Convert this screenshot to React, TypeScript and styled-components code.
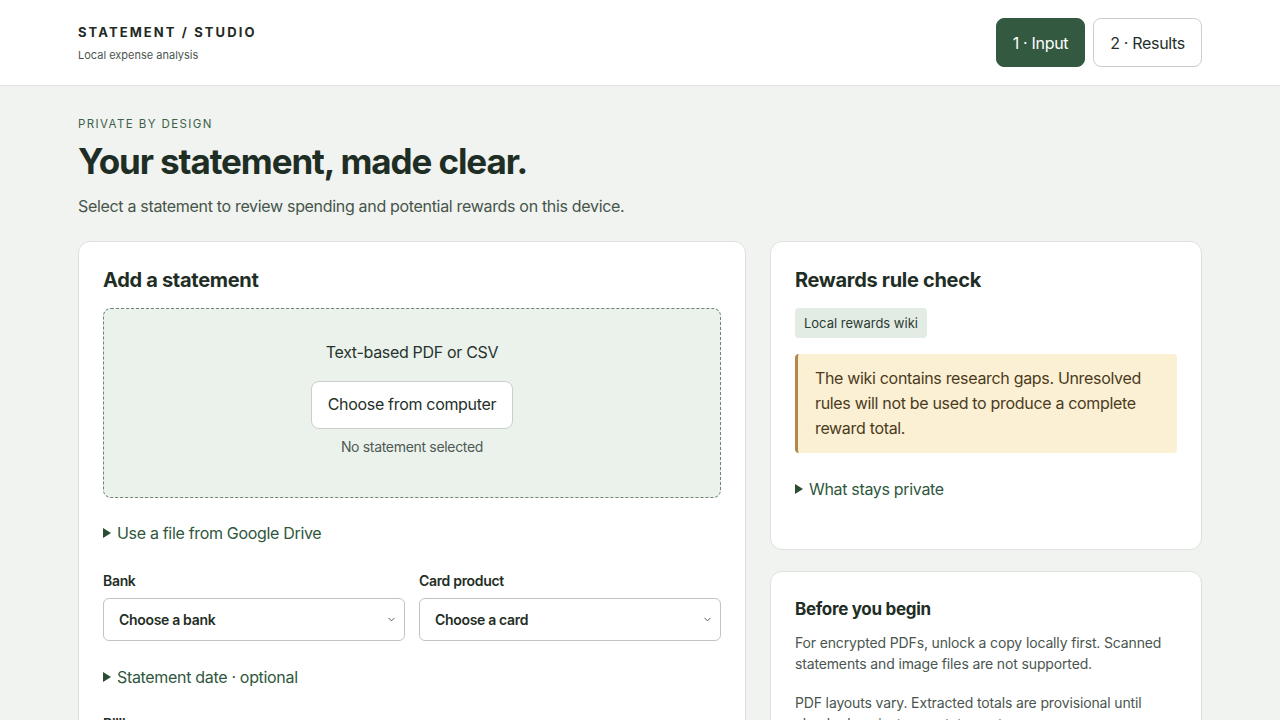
import React from "react";
import styled, { createGlobalStyle } from "styled-components";

const Global = createGlobalStyle`
  * { box-sizing: border-box; }
  html, body { margin: 0; padding: 0; }
  body {
    background: #f1f3f0;
    font-family: Inter, "Noto Sans", "Liberation Sans", sans-serif;
    color: #1f2e25;
    letter-spacing: -0.02em;
    -webkit-font-smoothing: antialiased;
  }
`;

const Header = styled.header`
  background: #ffffff;
  border-bottom: 1px solid #dde2dd;
  height: 86px;
`;

const Inner = styled.div`
  width: 1124px;
  margin: 0 auto;
`;

const HeaderInner = styled(Inner)`
  height: 100%;
  display: flex;
  align-items: center;
  justify-content: space-between;
`;

const Brand = styled.div`
  display: flex;
  flex-direction: column;
  gap: 8px;
  padding-top: 1px;
`;

const BrandName = styled.div`
  font-size: 13px;
  font-weight: 700;
  letter-spacing: 2.1px;
  color: #1f2a24;
`;

const BrandSub = styled.div`
  font-size: 11px;
  color: #4b5650;
  letter-spacing: 0;
`;

const Steps = styled.nav`
  display: flex;
  gap: 8px;
`;

const Step = styled.button<{ $active?: boolean }>`
  height: 49px;
  padding: 0 16px;
  border-radius: 8px;
  font-family: inherit;
  font-size: 16px;
  letter-spacing: -0.02em;
  border: 1px solid ${(p) => (p.$active ? "#335a40" : "#c9cfca")};
  background: ${(p) => (p.$active ? "#335a40" : "#ffffff")};
  color: ${(p) => (p.$active ? "#ffffff" : "#24302a")};
`;

const Main = styled(Inner)`
  padding-top: 31px;
`;

const Eyebrow = styled.div`
  font-size: 11.5px;
  letter-spacing: 1.4px;
  color: #3d6149;
  text-transform: uppercase;
`;

const Title = styled.h1`
  margin: 9px 0 0;
  font-size: 35px;
  font-weight: 700;
  letter-spacing: -1.1px;
  line-height: 1.2;
  color: #1f2e25;
`;

const Lead = styled.p`
  margin: 14px 0 0;
  font-size: 16px;
  color: #46554b;
`;

const Grid = styled.div`
  margin-top: 25px;
  display: grid;
  grid-template-columns: minmax(0, 1.546fr) minmax(0, 1fr);
  gap: 24px;
  align-items: start;
`;

const Column = styled.div`
  display: flex;
  flex-direction: column;
  gap: 21px;
`;

const Card = styled.section<{ $pb?: number; $pt?: number }>`
  background: #ffffff;
  border: 1px solid #dde2dd;
  border-radius: 12px;
  padding: ${(p) => p.$pt ?? 25}px 24px ${(p) => p.$pb ?? 25}px;
`;

const CardTitle = styled.h2<{ $size?: number }>`
  margin: 0;
  font-size: ${(p) => p.$size ?? 20}px;
  font-weight: 700;
  letter-spacing: -0.3px;
  line-height: 1.3;
  color: #1f2e25;
`;

const Drop = styled.div`
  margin-top: 15px;
  height: 190px;
  border: 1px dashed #6f8575;
  border-radius: 8px;
  background: #ebf2ec;
  display: flex;
  flex-direction: column;
  align-items: center;
  padding-top: 33px;
`;

const DropText = styled.div`
  font-size: 16px;
  color: #27332c;
`;

const ChooseButton = styled.button`
  margin-top: 19px;
  height: 48px;
  padding: 0 16px 2px;
  background: #ffffff;
  border: 1px solid #c9cfca;
  border-radius: 8px;
  font-family: inherit;
  font-size: 16px;
  letter-spacing: -0.02em;
  color: #24302a;
`;

const Hint = styled.div`
  margin-top: 9px;
  font-size: 14px;
  color: #4e5a53;
`;

const Disclosure = styled.div<{ $mt?: number }>`
  margin-top: ${(p) => p.$mt ?? 0}px;
  display: flex;
  align-items: center;
  gap: 6px;
  font-size: 16px;
  color: #2f573d;
`;

const Tri = styled.span`
  width: 0;
  height: 0;
  border-top: 5px solid transparent;
  border-bottom: 5px solid transparent;
  border-left: 8px solid #2b4d36;
`;

const Fields = styled.div`
  margin-top: 29px;
  display: grid;
  grid-template-columns: 1fr 1fr;
  gap: 14px;
`;

const Field = styled.label`
  display: flex;
  flex-direction: column;
  gap: 9px;
`;

const FieldLabel = styled.span`
  font-size: 14px;
  font-weight: 600;
  color: #1f2e25;
`;

const Select = styled.div`
  height: 43px;
  border: 1px solid #bfc6c1;
  border-radius: 6px;
  background: #ffffff;
  display: flex;
  align-items: center;
  justify-content: space-between;
  padding: 0 8px 0 15px;
  font-size: 14px;
  font-weight: 600;
  color: #1f2e25;
`;

const Chevron = () => (
  <svg width="9" height="9" viewBox="0 0 10 10" fill="none">
    <path d="M2 3.5 L5 6.5 L8 3.5" stroke="#555" strokeWidth="1.1" strokeLinecap="round" strokeLinejoin="round" />
  </svg>
);

const CutLabel = styled(FieldLabel)`
  display: block;
  margin-top: 28px;
`;

const Badge = styled.span`
  display: inline-block;
  margin-top: 15px;
  padding: 7px 9px;
  background: #e3ebe5;
  border-radius: 4px;
  font-size: 13px;
  color: #2c3c32;
  letter-spacing: 0;
`;

const Warning = styled.div`
  margin-top: 16px;
  background: #fbf0d4;
  border-left: 3px solid #b3894a;
  border-radius: 4px;
  padding: 12px 18px 12px 17px;
  font-size: 16px;
  line-height: 25px;
  color: #4b3b1d;
`;

const Para = styled.p<{ $mt?: number }>`
  margin: ${(p) => p.$mt ?? 0}px 0 0;
  font-size: 14px;
  line-height: 21px;
  color: #4a554f;
  letter-spacing: -0.01em;
`;

export default function App() {
  return (
    <>
      <Global />
      <Header>
        <HeaderInner>
          <Brand>
            <BrandName>STATEMENT / STUDIO</BrandName>
            <BrandSub>Local expense analysis</BrandSub>
          </Brand>
          <Steps>
            <Step $active>1 · Input</Step>
            <Step>2 · Results</Step>
          </Steps>
        </HeaderInner>
      </Header>
      <Main>
        <Eyebrow>Private by design</Eyebrow>
        <Title>Your statement, made clear.</Title>
        <Lead>Select a statement to review spending and potential rewards on this device.</Lead>
        <Grid>
          <Card>
            <CardTitle>Add a statement</CardTitle>
            <Drop>
              <DropText>Text-based PDF or CSV</DropText>
              <ChooseButton>Choose from computer</ChooseButton>
              <Hint>No statement selected</Hint>
            </Drop>
            <Disclosure $mt={25}>
              <Tri />
              Use a file from Google Drive
            </Disclosure>
            <Fields>
              <Field>
                <FieldLabel>Bank</FieldLabel>
                <Select>
                  Choose a bank
                  <Chevron />
                </Select>
              </Field>
              <Field>
                <FieldLabel>Card product</FieldLabel>
                <Select>
                  Choose a card
                  <Chevron />
                </Select>
              </Field>
            </Fields>
            <Disclosure $mt={26}>
              <Tri />
              Statement date · optional
            </Disclosure>
            <CutLabel>Billing</CutLabel>
            <Para $mt={60}>&nbsp;</Para>
          </Card>
          <Column>
            <Card $pb={50}>
              <CardTitle>Rewards rule check</CardTitle>
              <Badge>Local rewards wiki</Badge>
              <Warning>
                The wiki contains research gaps. Unresolved rules will not be used to produce a complete reward total.
              </Warning>
              <Disclosure $mt={26}>
                <Tri />
                What stays private
              </Disclosure>
            </Card>
            <Card $pt={26}>
              <CardTitle $size={17}>Before you begin</CardTitle>
              <Para $mt={12}>
                For encrypted PDFs, unlock a copy locally first. Scanned statements and image files are not supported.
              </Para>
              <Para $mt={18}>
                PDF layouts vary. Extracted totals are provisional until checked against your statement.
              </Para>
            </Card>
          </Column>
        </Grid>
      </Main>
    </>
  );
}
